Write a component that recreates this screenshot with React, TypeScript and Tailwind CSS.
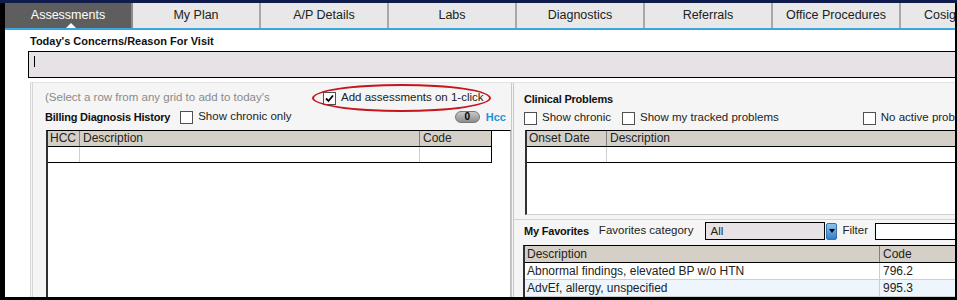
import React from "react";

const tabs = [
  "Assessments",
  "My Plan",
  "A/P Details",
  "Labs",
  "Diagnostics",
  "Referrals",
  "Office Procedures",
  "Cosign Queue",
];

function CheckBox({ checked }: { checked?: boolean }) {
  return (
    <span className="w-[13px] h-[13px] border border-[#505050] bg-white flex items-center justify-center shrink-0">
      {checked && (
        <svg width="9" height="9" viewBox="0 0 9 9">
          <path d="M1 4.5 L3.5 7 L8 1.5" stroke="#000" strokeWidth="1.8" fill="none" />
        </svg>
      )}
    </span>
  );
}

function App() {
  return (
    <div className="w-[957px] h-[300px] bg-black border-t-[3px] border-t-[#101d4c] pl-[5px] pr-[2px] pb-[3px] overflow-hidden font-['Liberation_Sans',Arial,sans-serif]">
      <div className="h-full bg-white flex flex-col overflow-hidden relative">
        {/* tabs */}
        <div className="flex h-[25px] shrink-0 bg-[#e8e8e8]">
          {tabs.map((t, i) => (
            <div
              key={t}
              className={
                i === 0
                  ? "relative w-[128px] shrink-0 bg-[#5e5e5e] text-white text-[12.5px] flex items-center justify-center border-r-2 border-[#8c8c8c]"
                  : "w-[128px] shrink-0 text-[#222] text-[12.5px] flex items-center justify-center border-r-2 border-[#a8a8a8] whitespace-nowrap overflow-hidden"
              }
            >
              {t}
              {i === 0 && (
                <span className="absolute bottom-0 left-[61px] w-0 h-0 border-l-[5px] border-r-[5px] border-b-[5px] border-l-transparent border-r-transparent border-b-white" />
              )}
            </div>
          ))}
        </div>
        <div className="h-[2px] bg-[#3aa6dd] shrink-0" />

        <div className="pl-[25px] pt-[4px] text-[11px] font-bold leading-[14px] text-[#111]">
          Today's Concerns/Reason For Visit
        </div>
        <div className="ml-[23px] mt-[3px] h-[27px] shrink-0 border border-black border-r-0 bg-[#e6e2e6] relative">
          <span className="absolute left-[5px] top-[4px] w-px h-[11px] bg-black" />
        </div>

        {/* main panel */}
        <div className="ml-[25px] mt-[4px] flex-1 flex bg-[#f5f5f5] border-t border-[#e2e2e2] border-l-[3px] border-l-[#d6d6d6] border-double relative">
          {/* left column */}
          <div className="w-[478px] shrink-0 flex flex-col pt-[8px]">
            <div className="flex items-center h-[14px] pl-[12px] text-[11.5px]">
              <span className="w-[278px] text-[#8a8a8a] whitespace-nowrap">
                (Select a row from any grid to add to today's
              </span>
              <CheckBox checked />
              <span className="ml-[5px] text-[#222]">Add assessments on 1-click</span>
            </div>
            <div className="flex items-center h-[14px] mt-[5px] pl-[12px] pr-[5px] text-[11.5px]">
              <span className="text-[11px] font-bold text-[#111] tracking-[-0.2px]">
                Billing Diagnosis History
              </span>
              <span className="ml-[10px]">
                <CheckBox />
              </span>
              <span className="ml-[5px] text-[#222]">Show chronic only</span>
              <span className="flex-1" />
              <span className="w-[25px] h-[12px] rounded-full bg-gradient-to-b from-[#c8c8c8] to-[#8e8e8e] border border-[#777] flex items-center justify-center text-[10px] font-bold text-black leading-none">
                0
              </span>
              <span className="ml-[6px] text-[11px] font-bold text-[#1b93d6]">Hcc</span>
            </div>
            <div className="ml-[13px] mt-[6px] flex-1 bg-white border-t border-t-black border-l-2 border-l-[#303030] border-r border-r-[#bdbdbd]">
              <div className="w-[444px] border-r border-b border-black text-[12px] text-[#222]">
                <div className="flex h-[16px] bg-[#d4d0c8] border-b border-black leading-[15px]">
                  <span className="w-[32px] pl-[2px] border-r border-[#808080]">HCC</span>
                  <span className="w-[340px] pl-[3px] border-r border-[#808080]">Description</span>
                  <span className="flex-1 pl-[3px]">Code</span>
                </div>
                <div className="flex h-[15px]">
                  <span className="w-[32px] border-r border-[#d0d0d0]" />
                  <span className="w-[340px] border-r border-[#d0d0d0]" />
                  <span className="flex-1" />
                </div>
              </div>
            </div>
          </div>

          {/* right column */}
          <div className="flex-1 min-w-0 flex flex-col border-l-[3px] border-double border-l-[#c8c8c8]">
            <div className="flex flex-col pt-[9px] pb-[4px] border-b border-[#d4d4d4]">
              <div className="pl-[10px] h-[14px] text-[11px] font-bold text-[#111] tracking-[-0.2px] leading-[14px]">
                Clinical Problems
              </div>
              <div className="flex items-center h-[14px] mt-[5px] pl-[10px] text-[11.5px] text-[#222] whitespace-nowrap">
                <CheckBox />
                <span className="ml-[5px]">Show chronic</span>
                <span className="ml-[11px]">
                  <CheckBox />
                </span>
                <span className="ml-[5px]">Show my tracked problems</span>
                <span className="ml-[84px]">
                  <CheckBox />
                </span>
                <span className="ml-[5px]">No active problems</span>
              </div>
              <div className="ml-[11px] mt-[5px] h-[85px] bg-white border-t border-t-black border-l-2 border-l-[#303030] border-b border-b-[#cfcfcf] text-[12px] text-[#222]">
                <div className="flex h-[16px] bg-[#d4d0c8] border-b border-black leading-[15px]">
                  <span className="w-[80px] pl-[2px] border-r border-[#808080]">Onset Date</span>
                  <span className="flex-1 pl-[3px]">Description</span>
                </div>
                <div className="flex h-[16px] border-b border-black">
                  <span className="w-[80px] border-r border-[#d0d0d0]" />
                  <span className="flex-1" />
                </div>
              </div>
            </div>

            <div className="flex items-center h-[18px] mt-[2px] pl-[10px] text-[11.5px] text-[#222] whitespace-nowrap">
              <span className="text-[11px] font-bold text-[#111] tracking-[-0.2px]">My Favorites</span>
              <span className="ml-[10px]">Favorites category</span>
              <span className="ml-[12px] w-[120px] h-[18px] border border-black bg-[#e6e2e6] pl-[4px] leading-[16px]">
                All
              </span>
              <span className="ml-[1px] w-[11px] h-[17px] rounded-[2px] bg-gradient-to-b from-[#8cc4f0] to-[#2d7fcb] border border-[#3a6ea5] flex items-center justify-center">
                <span className="w-0 h-0 border-l-[3px] border-r-[3px] border-t-[4px] border-l-transparent border-r-transparent border-t-black" />
              </span>
              <span className="ml-[5px]">Filter</span>
              <span className="ml-[7px] flex-1 h-[17px] border border-black border-r-0 bg-white" />
            </div>

            <div className="ml-[9px] mt-[5px] flex-1 bg-white border-t border-t-black border-l-2 border-l-[#303030] text-[12px] text-[#222] overflow-hidden">
              <div className="flex h-[17px] bg-[#d4d0c8] border-b border-black leading-[16px]">
                <span className="w-[355px] pl-[2px] border-r border-[#808080]">Description</span>
                <span className="flex-1 pl-[3px]">Code</span>
              </div>
              {[
                ["Abnormal findings, elevated BP w/o HTN", "796.2", "bg-white"],
                ["AdvEf, allergy, unspecified", "995.3", "bg-[#eef5fc]"],
                ["ALLERGY, FOOD, SPECIFIED", "693.11", "bg-white"],
              ].map(([d, c, bg]) => (
                <div key={d} className={`flex h-[17px] border-b border-[#cfcfcf] leading-[16px] ${bg}`}>
                  <span className="w-[355px] pl-[2px] border-r border-[#cfcfcf]">{d}</span>
                  <span className="flex-1 pl-[3px]">{c}</span>
                </div>
              ))}
            </div>
          </div>

          {/* annotation ellipse */}
          <span className="absolute left-[279px] top-[1px] w-[179px] h-[28px] rounded-[50%] border-2 border-[#c4161c]" />
        </div>
      </div>
    </div>
  );
}

export default App;
